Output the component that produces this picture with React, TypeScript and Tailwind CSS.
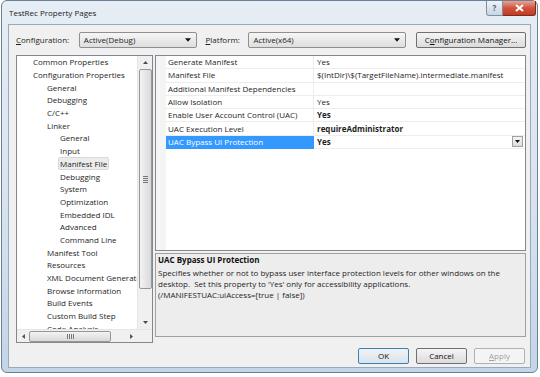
import React from 'react';

const treeItems: [string, number][] = [
  ['Common Properties', 0],
  ['Configuration Properties', 0],
  ['General', 1],
  ['Debugging', 1],
  ['C/C++', 1],
  ['Linker', 1],
  ['General', 2],
  ['Input', 2],
  ['Manifest File', 2],
  ['Debugging', 2],
  ['System', 2],
  ['Optimization', 2],
  ['Embedded IDL', 2],
  ['Advanced', 2],
  ['Command Line', 2],
  ['Manifest Tool', 1],
  ['Resources', 1],
  ['XML Document Generator', 1],
  ['Browse Information', 1],
  ['Build Events', 1],
  ['Custom Build Step', 1],
  ['Code Analysis', 1],
];

const indent = ['pl-[16px]', 'pl-[30px]', 'pl-[43px]'];

const props: { name: string; value: string; bold?: boolean }[] = [
  { name: 'Generate Manifest', value: 'Yes' },
  { name: 'Manifest File', value: '$(IntDir)\\$(TargetFileName).intermediate.manifest' },
  { name: 'Additional Manifest Dependencies', value: '' },
  { name: 'Allow Isolation', value: 'Yes' },
  { name: 'Enable User Account Control (UAC)', value: 'Yes', bold: true },
  { name: 'UAC Execution Level', value: 'requireAdministrator', bold: true },
  { name: 'UAC Bypass UI Protection', value: 'Yes', bold: true },
];

function Arrow({ dir }: { dir: 'up' | 'down' | 'left' | 'right' }) {
  const pts = {
    up: '0,4 3.5,0 7,4',
    down: '0,0 7,0 3.5,4',
    left: '4,0 4,7 0,3.5',
    right: '0,0 0,7 4,3.5',
  }[dir];
  const vert = dir === 'up' || dir === 'down';
  return (
    <svg width={vert ? 5 : 3} height={vert ? 3 : 5} viewBox={vert ? '0 0 7 4' : '0 0 4 7'}>
      <polygon points={pts} fill="#4d4d4d" />
    </svg>
  );
}

function Combo({ text, width }: { text: string; width: string }) {
  return (
    <div className={`${width} h-[16px] flex items-center justify-between pl-[4px] pr-[5px] rounded-[2px] border border-[#8e8f8f] bg-gradient-to-b from-[#f6f6f6] to-[#dedede]`}>
      <span>{text}</span>
      <svg width="6" height="4" viewBox="0 0 7 4">
        <polygon points="0,0 7,0 3.5,4" fill="#111" />
      </svg>
    </div>
  );
}

function Button({ children, primary, disabled, width = 'w-[51px]' }: { children: React.ReactNode; primary?: boolean; disabled?: boolean; width?: string }) {
  return (
    <div
      className={`${width} h-[16px] flex items-center justify-center rounded-[2px] border ${
        primary
          ? 'border-[#3c7fb1] bg-gradient-to-b from-[#f2f2f2] to-[#d8e4ee] text-[#111]'
          : disabled
          ? 'border-[#adb2b5] bg-[#f4f4f4] text-[#a0a0a0]'
          : 'border-[#707070] bg-gradient-to-b from-[#f4f4f4] to-[#dcdcdc] text-[#111]'
      }`}
    >
      {children}
    </div>
  );
}

export default function App() {
  return (
    <div className="w-[540px] h-[377px] bg-white overflow-hidden font-['Open_Sans',sans-serif] text-[8px] text-[#1e1e1e] leading-none">
      {/* window frame */}
      <div className="ml-[1px] w-[537px] h-[373px] rounded-[6px] border border-[#6d7f95] bg-gradient-to-b from-[#e6edf5] via-[#d9e4f0] to-[#c4d5e8] flex flex-col px-[6px] pb-[4px]">
        {/* title bar */}
        <div className="h-[23px] flex items-start justify-between">
          <span className="pl-[1px] pt-[8px] text-[8px] text-[#222]">TestRec Property Pages</span>
          <div className="flex -mr-[5px]">
            <div className="w-[17px] h-[15px] rounded-bl-[3px] border border-t-0 border-[#7f8fa3] bg-gradient-to-b from-[#eef3f8] to-[#c9d6e4] flex items-center justify-center text-[8px] text-[#4e5d70] font-bold">
              ?
            </div>
            <div className="w-[33px] h-[15px] rounded-br-[3px] border border-t-0 border-l-0 border-[#7b2b22] bg-gradient-to-b from-[#e8a393] via-[#d0533c] to-[#c33b22] flex items-center justify-center">
              <svg width="9" height="8" viewBox="0 0 9 8">
                <path d="M1 1 L8 7 M8 1 L1 7" stroke="#fff" strokeWidth="2" />
              </svg>
            </div>
          </div>
        </div>

        {/* client */}
        <div className="flex-1 border border-[#98a9bc] bg-[#f0f0f0] flex flex-col pl-[7px] pr-[4px] pt-[6px]">
          {/* configuration row */}
          <div className="h-[17px] flex items-center">
            <span className="w-[63px]">
              <u>C</u>onfiguration:
            </span>
            <Combo text="Active(Debug)" width="w-[118px]" />
            <span className="ml-[9px] w-[43px]">
              <u>P</u>latform:
            </span>
            <Combo text="Active(x64)" width="w-[158px]" />
            <div className="ml-[10px]">
              <Button width="w-[110px]">
                C<u>o</u>nfiguration Manager...
              </Button>
            </div>
          </div>

          {/* main panes */}
          <div className="mt-[7px] flex gap-[2px]">
            {/* tree */}
            <div className="w-[137px] h-[288px] border border-[#828790] bg-white flex flex-col">
              <div className="flex flex-1 min-h-0">
                <div className="flex-1 min-w-0 overflow-hidden flex flex-col">
                  {treeItems.map(([label, level], i) => (
                    <div key={i} className={`h-[12.7px] shrink-0 flex items-center whitespace-nowrap ${indent[level]}`}>
                      {label === 'Manifest File' && level === 2 ? (
                        <span className="px-[1px] py-[1.5px] -ml-[2px] border border-[#d9d9d9] bg-[#ececec] rounded-[2px]">{label}</span>
                      ) : (
                        <span>{label}</span>
                      )}
                    </div>
                  ))}
                </div>
                {/* vertical scrollbar */}
                <div className="w-[15px] bg-[#f0f0f0] border-l border-[#e6e6e6] flex flex-col items-center">
                  <div className="h-[13px] flex items-center justify-center">
                    <Arrow dir="up" />
                  </div>
                  <div className="w-[13px] h-[220px] rounded-[2px] border border-[#979797] bg-gradient-to-r from-[#f3f3f3] to-[#d9d9d9] flex items-center justify-center">
                    <div className="flex flex-col gap-[1px]">
                      <div className="w-[5px] h-[1px] bg-[#777]" />
                      <div className="w-[5px] h-[1px] bg-[#777]" />
                      <div className="w-[5px] h-[1px] bg-[#777]" />
                      <div className="w-[5px] h-[1px] bg-[#777]" />
                    </div>
                  </div>
                  <div className="flex-1" />
                  <div className="h-[13px] flex items-center justify-center">
                    <Arrow dir="down" />
                  </div>
                </div>
              </div>
              {/* horizontal scrollbar */}
              <div className="h-[13px] flex bg-[#f0f0f0] border-t border-[#e6e6e6]">
                <div className="flex-1 flex items-center">
                  <div className="w-[12px] flex items-center justify-center">
                    <Arrow dir="left" />
                  </div>
                  <div className="w-[82px] h-[11px] rounded-[2px] border border-[#979797] bg-gradient-to-b from-[#f3f3f3] to-[#d9d9d9] flex items-center justify-center gap-[1px]">
                    <div className="w-[1px] h-[5px] bg-[#777]" />
                    <div className="w-[1px] h-[5px] bg-[#777]" />
                    <div className="w-[1px] h-[5px] bg-[#777]" />
                    <div className="w-[1px] h-[5px] bg-[#777]" />
                  </div>
                  <div className="flex-1" />
                  <div className="w-[12px] flex items-center justify-center">
                    <Arrow dir="right" />
                  </div>
                </div>
                <div className="w-[15px] bg-[#f0f0f0]" />
              </div>
            </div>

            {/* property grid + description */}
            <div className="w-[373px] flex flex-col">
              <div className="h-[196px] border border-[#828790] bg-white flex flex-col">
                {props.map((p, i) => {
                  const sel = i === props.length - 1;
                  return (
                    <div key={i} className="h-[13.3px] flex">
                      <div className="w-[10px] bg-[#f4f4f4]" />
                      <div
                        className={`w-[148px] flex items-center pl-[2px] whitespace-nowrap border-r border-b ${
                          sel ? 'bg-[#3399ff] text-white border-[#3399ff]' : 'border-[#ededed]'
                        }`}
                      >
                        {p.name}
                      </div>
                      <div className={`flex-1 flex items-center justify-between pl-[3px] pr-[2px] border-b border-[#ededed] whitespace-nowrap ${p.bold ? 'font-bold' : ''}`}>
                        <span>{p.value}</span>
                        {sel && (
                          <div className="w-[11px] h-[11px] border border-[#a0a0a0] bg-gradient-to-b from-[#f5f5f5] to-[#dcdcdc] flex items-center justify-center">
                            <svg width="5" height="3" viewBox="0 0 7 4">
                              <polygon points="0,0 7,0 3.5,4" fill="#111" />
                            </svg>
                          </div>
                        )}
                      </div>
                    </div>
                  );
                })}
                <div className="flex-1 flex">
                  <div className="w-[10px] bg-[#f4f4f4]" />
                </div>
              </div>
              <div className="mt-[2px] h-[84px] border border-[#a0a0a0] bg-[#ededed] pl-[2px] pt-[2px] flex flex-col">
                <div className="font-bold text-[#111]">UAC Bypass UI Protection</div>
                <div className="mt-[3px] leading-[11px] text-[#1e1e1e]">
                  Specifies whether or not to bypass user interface protection levels for other windows on the
                  <br />
                  desktop.&nbsp; Set this property to 'Yes' only for accessibility applications.
                  <br />
                  (/MANIFESTUAC:uiAccess=[true | false])
                </div>
              </div>
            </div>
          </div>

          {/* buttons */}
          <div className="mt-[5px] flex justify-end gap-[7px] pr-[1px]">
            <Button primary>OK</Button>
            <Button>Cancel</Button>
            <Button disabled>
              <u>A</u>pply
            </Button>
          </div>
        </div>
      </div>
    </div>
  );
}
